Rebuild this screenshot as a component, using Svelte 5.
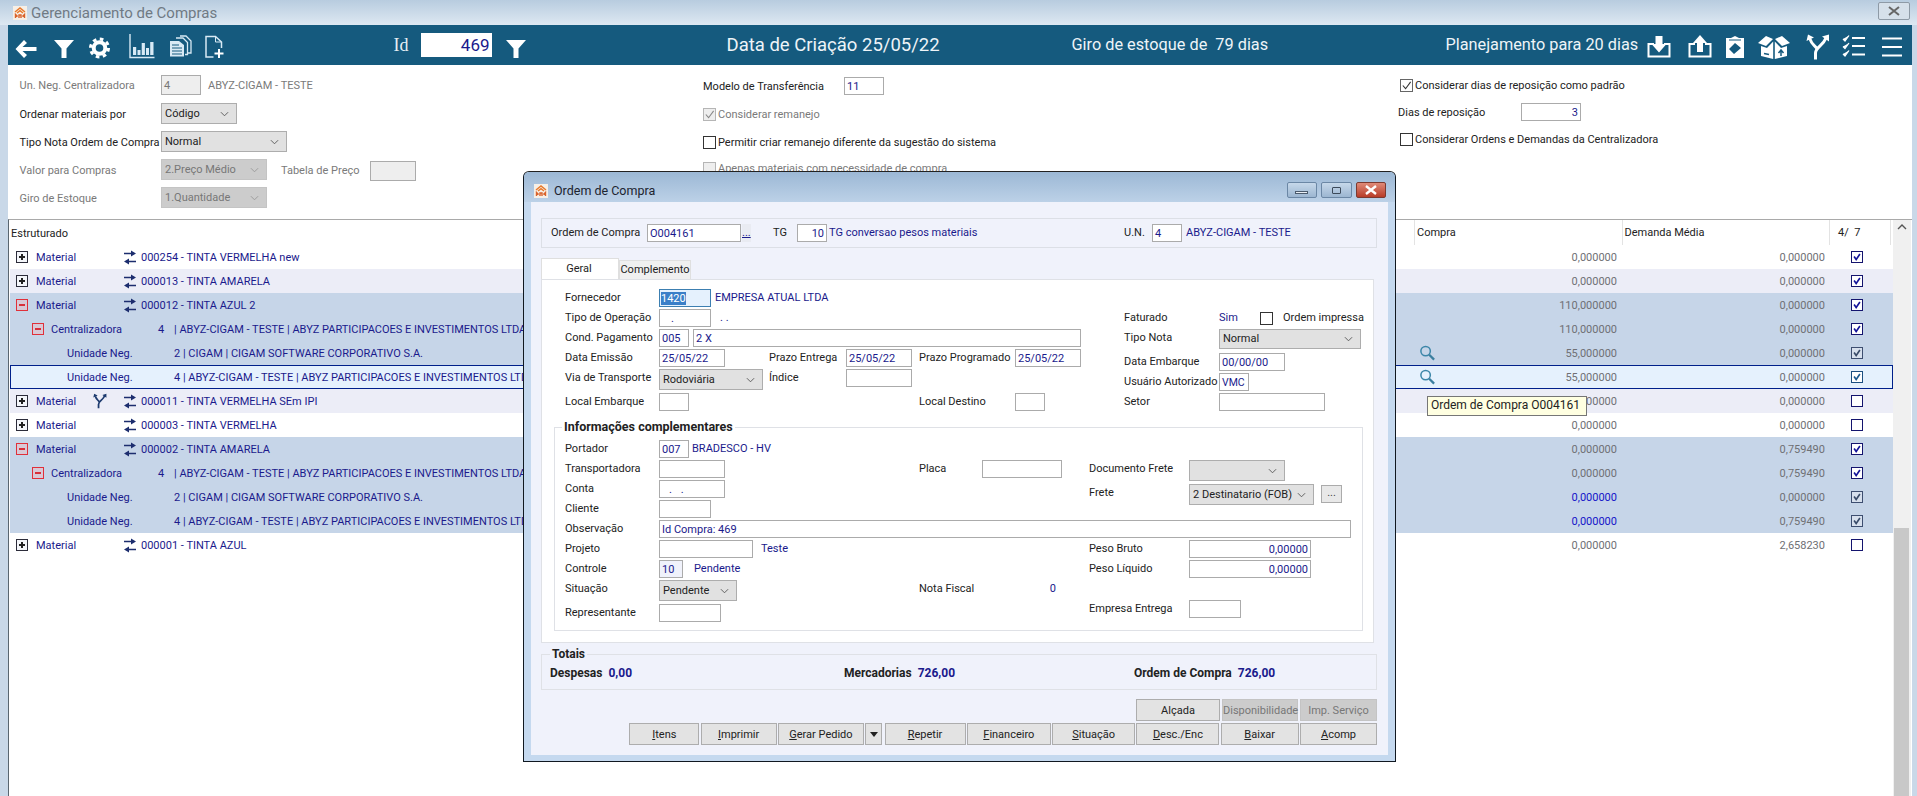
<script>
  const rows = [
    { k: 'm', open: false, label: 'Material', text: '000254 - TINTA VERMELHA new', a: '0,000000', b: '0,000000', chk: 1, bg: '' },
    { k: 'm', open: false, label: 'Material', text: '000013 - TINTA AMARELA', a: '0,000000', b: '0,000000', chk: 1, bg: 'alt' },
    { k: 'm', open: true, label: 'Material', text: '000012 - TINTA AZUL 2', a: '110,000000', b: '0,000000', chk: 1, bg: 'exp' },
    { k: 'c', label: 'Centralizadora', num: '4', text: '| ABYZ-CIGAM - TESTE | ABYZ PARTICIPACOES E INVESTIMENTOS LTDA', a: '110,000000', b: '0,000000', chk: 1, bg: 'exp' },
    { k: 'u', label: 'Unidade Neg.', text: '2 | CIGAM | CIGAM SOFTWARE CORPORATIVO S.A.', a: '55,000000', b: '0,000000', chk: 2, bg: 'exp', mag: true },
    { k: 'u', label: 'Unidade Neg.', text: '4 | ABYZ-CIGAM - TESTE | ABYZ PARTICIPACOES E INVESTIMENTOS LTDA', a: '55,000000', b: '0,000000', chk: 3, bg: 'cur', mag: true },
    { k: 'm', open: false, fork: true, label: 'Material', text: '000011 - TINTA VERMELHA SEm IPI', a: '0,000000', b: '0,000000', chk: 0, bg: 'alt' },
    { k: 'm', open: false, label: 'Material', text: '000003 - TINTA VERMELHA', a: '0,000000', b: '0,000000', chk: 0, bg: '' },
    { k: 'm', open: true, label: 'Material', text: '000002 - TINTA AMARELA', a: '0,000000', b: '0,759490', chk: 1, bg: 'exp' },
    { k: 'c', label: 'Centralizadora', num: '4', text: '| ABYZ-CIGAM - TESTE | ABYZ PARTICIPACOES E INVESTIMENTOS LTDA', a: '0,000000', b: '0,759490', chk: 1, bg: 'exp' },
    { k: 'u', label: 'Unidade Neg.', text: '2 | CIGAM | CIGAM SOFTWARE CORPORATIVO S.A.', a: '0,000000', b: '0,000000', chk: 2, bg: 'exp', blue: true },
    { k: 'u', label: 'Unidade Neg.', text: '4 | ABYZ-CIGAM - TESTE | ABYZ PARTICIPACOES E INVESTIMENTOS LTDA', a: '0,000000', b: '0,759490', chk: 2, bg: 'exp', blue: true },
    { k: 'm', open: false, label: 'Material', text: '000001 - TINTA AZUL', a: '0,000000', b: '2,658230', chk: 0, bg: '' }
  ];
  const buttons = [
    ['I', 'tens', 'b70'], ['I', 'mprimir', 'b76'], ['G', 'erar Pedido', 'b86'], null,
    ['R', 'epetir', 'b81'], ['F', 'inanceiro', 'b84'], ['S', 'ituação', 'b83'],
    ['D', 'esc./Enc', 'b83'], ['B', 'aixar', 'b78'], ['A', 'comp', 'b77']
  ];
</script>

{#snippet logo()}
  <svg class="logo" viewBox="0 0 14 14">
    <rect width="14" height="14" fill="#f6efe6" />
    <path d="M2 6 L7 2 L12 6 M4 7 L7 4.6 L10 7" fill="none" stroke="#e8792b" stroke-width="1.5" />
    <path d="M2.5 12 V8.5 L4.6 10.5 M11.5 12 V8.5 L9.4 10.5 M6 12 V9 H8 V12" fill="none" stroke="#d9622a" stroke-width="1.4" />
  </svg>
{/snippet}

{#snippet sel(text, cls, dis = false)}
  <div class="sel {cls}" class:dis>
    <span>{text}</span>
    <svg viewBox="0 0 10 6" class="chev"><path d="M1 1 L5 5 L9 1" fill="none" stroke="currentColor" stroke-width="1" /></svg>
  </div>
{/snippet}

{#snippet checkbox(on, cls = '')}
  <span class="cb {cls}">
    {#if on}<svg viewBox="0 0 12 12"><path d="M2 6 L5 9.5 L10.5 2" fill="none" stroke="currentColor" stroke-width="1.2" /></svg>{/if}
  </span>
{/snippet}

{#snippet arrows()}
  <svg class="swap" viewBox="0 0 14 15">
    <path d="M1 3.5 H9 M13 11.5 H5" stroke="#1c2d6e" stroke-width="1.6" fill="none" />
    <path d="M8 0.5 L13 3.5 L8 6.5 Z M6 8.5 L1 11.5 L6 14.5 Z" fill="#1c2d6e" />
  </svg>
{/snippet}

{#snippet fork(cls, color)}
  <svg class={cls} viewBox="0 0 24 26">
    <path d="M9.5 25.5 V19 C9.5 13 17 12 20 4 M4 5 C5 9 8 11 10.5 14" fill="none" stroke={color} stroke-width="3" />
    <path d="M0.5 7 L2 0.5 L8 3.5 Z M16 2.5 L23 0.5 L23 7.5 Z" fill={color} />
  </svg>
{/snippet}

<div class="app">
  <header class="wintitle">
    {@render logo()}
    <span>Gerenciamento de Compras</span>
    <button class="winclose" aria-label="Fechar">
      <svg viewBox="0 0 14 10"><path d="M2 1 L12 9 M12 1 L2 9" stroke="#666" stroke-width="2" fill="none" /></svg>
    </button>
  </header>

  <main class="main">
    <div class="toolbar">
      <svg class="ti ia" viewBox="0 0 28 28"><path d="M3.5 16 L12 7 L15 10 L10.5 14 H24.5 V18 H10.5 L15 22 L12 25 Z" /></svg>
      <svg class="ti ib" viewBox="0 0 28 28"><path d="M4 7 H24 L16.5 15.5 V25 H11.5 V15.5 Z" /></svg>
      <svg class="ti ic" viewBox="0 0 28 28"><circle cx="14.5" cy="15" r="5.8" fill="none" stroke="#fff" stroke-width="4" /><circle cx="14.5" cy="15" r="9" fill="none" stroke="#fff" stroke-width="3" stroke-dasharray="3.6 3.47" /></svg>
      <svg class="ti id" viewBox="0 0 28 28"><path d="M2 1 V24.5 H26.5" fill="none" stroke="#d8eaf5" stroke-width="1.4" /><path d="M5 14h3.2v8H5z M9.5 17h3v5h-3z M13.7 10h3.2v12h-3.2z M18 15h3v7h-3z M22.2 9h3.3v13h-3.3z" fill="#d8eaf5" /></svg>
      <svg class="ti ie" viewBox="0 0 28 28"><path d="M14 3 H20 L25 8 V20 H22" fill="none" stroke="#d8eaf5" stroke-width="1.3" /><path d="M10 5 H17 L21.5 9.5 V21.5 H19" fill="none" stroke="#d8eaf5" stroke-width="1.3" /><path d="M4 8 H13 L18 12 V23.5 H4 Z" fill="#d8eaf5" /><path d="M6 12 H13 M6 15 H16 M6 18 H16 M6 21 H16" stroke="#155a7e" stroke-width="1" /></svg>
      <svg class="ti if" viewBox="0 0 28 28"><path d="M13.5 24 H6 V3.5 H15.5 L21.5 9 V15" fill="none" stroke="#d8eaf5" stroke-width="1.5" /><path d="M15.5 3.5 V9 H21.5" fill="none" stroke="#d8eaf5" stroke-width="1" /><path d="M19 16 V25 M14.5 20.5 H23.5" stroke="#fff" stroke-width="2" /></svg>

      <span class="idlabel">Id</span>
      <span class="idinput">469</span>
      <svg class="ti ig" viewBox="0 0 28 28"><path d="M4 7 H24 L16.5 15.5 V25 H11.5 V15.5 Z" /></svg>

      <span class="bartext t1">Data de Criação 25/05/22</span>
      <span class="bartext t2">Giro de estoque de&nbsp; 79 dias</span>
      <span class="bartext t3">Planejamento para 20 dias</span>

      <svg class="ti ih" viewBox="0 0 28 28"><path d="M9 11 H3.5 V23.5 H24.5 V11 H19" fill="none" stroke="#fff" stroke-width="2" /><path d="M10.5 3 H17.5 V11 H21.5 L14 19.5 L6.5 11 H10.5 Z" /></svg>
      <svg class="ti ii" viewBox="0 0 28 28"><path d="M9 11 H3.5 V23.5 H24.5 V11 H19" fill="none" stroke="#fff" stroke-width="2" /><path d="M11 19 V10 H7 L14 2 L21 10 H17 V19 Z" /></svg>
      <svg class="ti ij" viewBox="0 0 28 28"><path fill-rule="evenodd" d="M5 5 H10 L14 3 L18 5 H23 V25 H5 Z M14 10 L20 15 L13 21 L8 16 Z" /><path d="M8 7 H20" stroke="#155a7e" stroke-width="1" /></svg>
      <svg class="ti ik" viewBox="0 0 34 28">
        <path d="M1 10 L9 3 L16 6 L9 13 Z M33 10 L25 3 L18 6 L25 13 Z M4 13 L10 15 L16.2 8.5 V26 L4 23 Z M30 13 L24 15 L17.8 8.5 V26 L30 23 Z" />
        <path d="M24 23 V18 M21.5 20 L24 17 L26.5 20" stroke="#155a7e" stroke-width="1.5" fill="none" />
        <path d="M7 20.5 L12 21.5" stroke="#155a7e" stroke-width="1.5" />
      </svg>
      {@render fork('ti il', '#fff')}
      <svg class="ti im" viewBox="0 0 28 28" fill="none" stroke="#fff"><path d="M3 6 L5 8 L9 2.5 M3 13.5 L5 15.5 L9 10 M3 21 L5 23 L9 17.5" stroke-width="1.2" /><path d="M12 5 H25 M12 13 H25 M12 21.5 H25" stroke-width="2" /></svg>
      <svg class="ti in" viewBox="0 0 28 28" fill="none" stroke="#fff"><path d="M4 5.5 H24 M4 14 H24 M4 22.5 H24" stroke-width="2.2" /></svg>
    </div>

    <section class="filters">
      <div class="fcol c1">
        <div class="frow r20 mt10 gray"><span class="flabel">Un. Neg. Centralizadora</span><div class="inp dis w40">4</div><span class="after">ABYZ-CIGAM - TESTE</span></div>
        <div class="frow r21 mt8"><span class="flabel">Ordenar materiais por</span>{@render sel('Código', 'w76')}</div>
        <div class="frow r21 mt7"><span class="flabel">Tipo Nota Ordem de Compra</span>{@render sel('Normal', 'w126')}</div>
        <div class="frow r21 mt7 gray"><span class="flabel">Valor para Compras</span>{@render sel('2.Preço Médio', 'w106', true)}<span class="tabela">Tabela de Preço</span><div class="inp dis w46 drop">&nbsp;</div></div>
        <div class="frow r21 mt7 gray"><span class="flabel">Giro de Estoque</span>{@render sel('1.Quantidade', 'w106', true)}</div>
      </div>
      <div class="fcol c2">
        <div class="frow r20 mt11"><span class="mlabel">Modelo de Transferência</span><div class="inp w40">11</div></div>
        <div class="frow ck gray mt11">{@render checkbox(true, 'cdis')}<span class="cktext">Considerar remanejo</span></div>
        <div class="frow ck mt14">{@render checkbox(false)}<span class="cktext">Permitir criar remanejo diferente da sugestão do sistema</span></div>
        <div class="frow ck gray mt12">{@render checkbox(false, 'cdis')}<span class="cktext">Apenas materiais com necessidade de compra</span></div>
      </div>
      <div class="fcol c3">
        <div class="frow ck mt13">{@render checkbox(true, 'cgray')}<span class="cktext">Considerar dias de reposição como padrão</span></div>
        <div class="frow r18 mt11"><span class="dlabel">Dias de reposição</span><div class="inp w60 vright nv">3</div></div>
        <div class="frow ck mt11">{@render checkbox(false)}<span class="cktext">Considerar Ordens e Demandas da Centralizadora</span></div>
      </div>
    </section>

    <section class="gridwrap">
      <div class="grid">
        <div class="ghead">
          <span class="h0">Estruturado</span>
          <span class="h1">Compra</span>
          <span class="h2">Demanda Média</span>
          <span class="h3">4/&nbsp; 7</span>
        </div>
        {#each rows as r}
          <div class="row {r.bg}">
            <div class="tree {r.k}">
              {#if r.k === 'm'}
                <span class="exp-box" class:open={r.open}><i></i>{#if !r.open}<b></b>{/if}</span>
                <span class="lbl-m">{r.label}</span>
                <span class="forkcell">{#if r.fork}{@render fork('rowfork', '#1c3a6e')}{/if}</span>
                {@render arrows()}
                <span class="rtext">{r.text}</span>
              {:else if r.k === 'c'}
                <span class="exp-box open"><i></i></span>
                <span class="lbl-c">{r.label}</span>
                <span class="num">{r.num}</span>
                <span class="rest">{r.text}</span>
              {:else}
                <span class="lbl-u">{r.label}</span>
                <span class="rest">{r.text}</span>
              {/if}
            </div>
            <div class="magcell">
              {#if r.mag}
                <svg viewBox="0 0 18 18"><circle cx="7" cy="7" r="5" fill="none" stroke="#3b86a8" stroke-width="1.6" /><path d="M10.8 10.8 L16 16" stroke="#3b7f9f" stroke-width="2.4" /></svg>
              {/if}
            </div>
            <div class="val" class:blueval={r.blue}>{r.a}</div>
            <div class="val">{r.b}</div>
            <div class="chkcell">
              <span class="gcb s{r.chk}">
                {#if r.chk}<svg viewBox="0 0 12 12"><path d="M2.5 5.5 L5 9 L9.5 2.5" fill="none" stroke="currentColor" stroke-width="2" /></svg>{/if}
              </span>
            </div>
          </div>
        {/each}
      </div>
      <div class="scroll">
        <div class="up"><svg viewBox="0 0 10 6"><path d="M1 5 L5 1 L9 5" fill="none" stroke="#555" stroke-width="1.4" /></svg></div>
        <div class="thumb"></div>
      </div>
    </section>
  </main>

  <div class="tooltip">Ordem de Compra O004161</div>

  <div class="dialog">
    <header class="dtitle">
      {@render logo()}
      <span>Ordem de Compra</span>
      <div class="dbtns">
        <span class="dbtn"><i class="min"></i></span>
        <span class="dbtn"><i class="max"></i></span>
        <span class="dbtn close"><svg viewBox="0 0 14 10"><path d="M2 1 L12 9 M12 1 L2 9" stroke="#fff" stroke-width="2.4" fill="none" /></svg></span>
      </div>
    </header>
    <div class="dbody">
      <div class="hpanel">
        <span class="hl1">Ordem de Compra</span>
        <div class="inp w94">O004161</div>
        <span class="dots">...</span>
        <span class="hl2">TG</span>
        <div class="inp w30 vright">10</div>
        <span class="v tgtext">TG conversao pesos materiais</span>
        <span class="hl3">U.N.</span>
        <div class="inp w30">4</div>
        <span class="v unv">ABYZ-CIGAM - TESTE</span>
      </div>

      <div class="tabs">
        <span class="tab on">Geral</span>
        <span class="tab">Complemento</span>
      </div>

      <div class="page">
        <div class="upper">
          <div class="ugrid">
            <span>Fornecedor</span>
            <div class="span-all line"><div class="inp w52 focus"><mark>1420</mark></div><span class="v ml4">EMPRESA ATUAL LTDA</span></div>
            <span>Tipo de Operação</span>
            <div class="span-all line"><div class="inp w52 cdots">.</div><span class="v ml9">. .</span></div>
            <span>Cond. Pagamento</span>
            <div class="span-all line"><div class="inp w30">005</div><div class="inp w388 ml4">2 X</div></div>
            <span>Data Emissão</span>
            <div class="inp w66">25/05/22</div>
            <span>Prazo Entrega</span>
            <div class="inp w66">25/05/22</div>
            <span>Prazo Programado</span>
            <div class="inp w66">25/05/22</div>
            <span>Via de Transporte</span>
            {@render sel('Rodoviária', 'w104')}
            <span>Índice</span>
            <div class="inp w66">&nbsp;</div>
            <i></i><i></i>
            <span>Local Embarque</span>
            <div class="inp w30">&nbsp;</div>
            <i></i><i></i>
            <span>Local Destino</span>
            <div class="inp w30">&nbsp;</div>
          </div>
          <div class="rgrid">
            <span>Faturado</span>
            <div class="line"><span class="v sim">Sim</span>{@render checkbox(false)}<span class="oi">Ordem impressa</span></div>
            <span>Tipo Nota</span>
            {@render sel('Normal', 'w142 h20')}
            <span>Data Embarque</span>
            <div class="inp w66">00/00/00</div>
            <span>Usuário Autorizado</span>
            <div class="inp w30 small">VMC</div>
            <span>Setor</span>
            <div class="inp w106">&nbsp;</div>
          </div>
        </div>

        <fieldset class="group">
          <legend>Informações complementares</legend>
          <div class="ggrid">
            <span>Portador</span>
            <div class="span-to-end line"><div class="inp w30">007</div><span class="v ml3">BRADESCO - HV</span></div>

            <span>Transportadora</span>
            <div class="inp w66">&nbsp;</div>
            <span>Placa</span>
            <div class="inp w80">&nbsp;</div>
            <span>Documento Frete</span>
            {@render sel('', 'w96')}

            <span>Conta</span>
            <div class="inp w66 cdots2">. .</div>
            <i></i><i></i>
            <span class="dn4">Frete</span>
            <div class="line dn4 top">{@render sel('2 Destinatario (FOB)', 'w125')}<span class="morebtn">...</span></div>

            <span>Cliente</span>
            <div class="span-to-end"><div class="inp w52">&nbsp;</div></div>

            <span>Observação</span>
            <div class="span-to-end"><div class="inp w692">Id Compra: 469</div></div>

            <span>Projeto</span>
            <div class="line span34"><div class="inp w94">&nbsp;</div><span class="v ml8">Teste</span></div>
            <span>Peso Bruto</span>
            <div class="inp w122 vright">0,00000</div>

            <span>Controle</span>
            <div class="line span34"><div class="inp w24 tint">10</div><span class="v ml11">Pendente</span></div>
            <span>Peso Líquido</span>
            <div class="inp w122 vright">0,00000</div>

            <span>Situação</span>
            {@render sel('Pendente', 'w78')}
            <span>Nota Fiscal</span>
            <span class="v nfv">0</span>
            <i></i><i></i>

            <span class="dn4">Representante</span>
            <div class="inp w62 dn4">&nbsp;</div>
            <i></i><i></i>
            <span>Empresa Entrega</span>
            <div class="inp w52">&nbsp;</div>
          </div>
        </fieldset>
      </div>

      <fieldset class="totais">
        <legend>Totais</legend>
        <div class="totrow">
          <div class="tot t-a"><b>Despesas</b><b class="v">0,00</b></div>
          <div class="tot t-b"><b>Mercadorias</b><b class="v">726,00</b></div>
          <div class="tot t-c"><b>Ordem de Compra</b><b class="v">726,00</b></div>
        </div>
      </fieldset>

      <div class="btnrow first">
        <span class="btn b84">Alçada</span>
        <span class="btn off b76">Disponibilidade</span>
        <span class="btn off b77">Imp. Serviço</span>
      </div>
      <div class="btnrow">
        {#each buttons as b}
          {#if b}
            <span class="btn {b[2]}"><u>{b[0]}</u>{b[1]}</span>
          {:else}
            <span class="btn arrowbtn"><svg viewBox="0 0 8 5"><path d="M0 0 H8 L4 5 Z" fill="#222" /></svg></span>
          {/if}
        {/each}
      </div>
    </div>
  </div>
</div>

<style>
  :global(body) { margin: 0; background: #fff; }
  .app {
    position: relative; width: 1917px; height: 796px; overflow: hidden;
    display: flex; flex-direction: column;
    background: #c9d8e8;
    font: 11px/18px Roboto, "Noto Sans", sans-serif;
    color: #222;
  }
  .logo { width: 14px; height: 14px; flex: none; }

  .wintitle {
    height: 25px; flex: none; display: flex; align-items: center; padding-left: 13px; gap: 4px;
    background: linear-gradient(#b8ccdf, #dde8f2); color: #707a84; font-size: 15px;
    box-sizing: border-box; position: relative;
  }
  .winclose {
    margin-left: auto; margin-right: 7px; width: 32px; height: 18px; margin-top: -4px; padding: 0;
    border: 1px solid #8e9aa6; border-radius: 2px; background: #d6e0ea; display: flex; align-items: center; justify-content: center;
  }
  .winclose svg { width: 14px; height: 10px; }

  .main { flex: 1; margin: 0 5px 0 8px; background: #fff; display: flex; flex-direction: column; min-height: 0; }

  .toolbar { height: 40px; flex: none; background: #155a7e; display: flex; align-items: center; position: relative; color: #fff; }
  .ti { width: 28px; height: 28px; flex: none; fill: #fff; margin-top: 4px; }
  .ia { margin-left: 3.5px; }
  .ib { margin-left: 10px; }
  .ic { margin-left: 7px; }
  .id { margin-left: 15px; }
  .ie { margin-left: 10px; }
  .if { margin-left: 6px; }
  .idlabel { margin-left: 166px; font: 18px/24px "Liberation Serif", serif; color: #e6eef3; width: 27px; }
  .idinput { width: 71px; height: 24px; background: #fff; color: #1a1a8c; font-size: 17px; line-height: 24px; text-align: right; padding-right: 2px; box-sizing: border-box; }
  .ig { margin-left: 10px; }
  .bartext { font-size: 16.3px; line-height: 24px; white-space: nowrap; color: #eef4f8; flex: none; }
  .t1 { margin-left: 197px; width: 345px; font-size: 18.5px; }
  .t2 { width: 374px; }
  .t3 { width: 199px; }
  .ih { margin-left: 0; }
  .ii { margin-left: 13px; }
  .ij { margin-left: 7px; }
  .ik { width: 34px; margin-left: 8px; }
  .il { width: 24px; height: 26px; margin-left: 15px; }
  .im { margin-left: 10.5px; width: 28px; }
  .in { margin-left: 10px; }

  .filters { height: 154px; flex: none; display: flex; overflow: hidden; }
  .fcol { display: flex; flex-direction: column; flex: none; }
  .c1 { width: 694px; padding-left: 11.5px; box-sizing: border-box; }
  .c2 { width: 696px; padding-left: 1px; box-sizing: border-box; }
  .c3 { flex: 1; padding-left: 2px; }
  .frow { display: flex; align-items: center; white-space: nowrap; flex: none; }
  .r20 { height: 20px; } .r21 { height: 21px; } .r18 { height: 18px; }
  .mt7 { margin-top: 7px; } .mt8 { margin-top: 8px; } .mt10 { margin-top: 10px; } .mt11 { margin-top: 11px; } .mt12 { margin-top: 12px; } .mt13 { margin-top: 13px; } .mt14 { margin-top: 14px; }
  .gray { color: #7a7a7a; }
  .flabel { width: 141.5px; flex: none; padding-top: 2px; }
  .mlabel { width: 141px; flex: none; padding-top: 2px; }
  .dlabel { width: 123px; flex: none; margin-left: -2px; padding-top: 2px; }
  .after { margin-left: 7px; padding-top: 2px; }
  .tabela { margin-left: 14px; width: 89px; padding-top: 2px; }
  .cktext { padding-top: 2px; }
  .drop { height: 20px; margin-top: 2px; }
  .ck { gap: 2px; height: 14px; }

  .inp {
    box-sizing: border-box; height: 18px; border: 1px solid #ababab; background: #fff; color: #1a1a8c;
    padding: 0 2px; line-height: 17px; white-space: nowrap; overflow: hidden; flex: none;
  }
  .inp.dis { background: #eee; color: #777; height: 20px; line-height: 19px; }
  .vright { text-align: right; }
  .w24 { width: 24px; } .w30 { width: 30px; } .w40 { width: 40px; } .w46 { width: 46px; } .w52 { width: 52px; } .w60 { width: 60px; } .w62 { width: 62px; } .w66 { width: 66px; } .w76 { width: 76px; } .w78 { width: 78px; } .w80 { width: 80px; } .w94 { width: 94px; } .w96 { width: 96px; } .w104 { width: 104px; } .w106 { width: 106px; } .w122 { width: 122px; } .w125 { width: 125px; } .w126 { width: 126px; } .w142 { width: 142px; } .w388 { width: 388px; } .w692 { width: 692px; }

  .sel {
    box-sizing: border-box; height: 21px; background: #e1e1e1; border: 1px solid #adadad; color: #222;
    display: flex; align-items: center; justify-content: space-between; padding: 0 7px 0 3px; flex: none; white-space: nowrap;
  }
  .sel.dis { background: #ccc; color: #777; border-color: #c4c4c4; }
  .sel.h20 { height: 20px; }
  .chev { width: 9px; height: 6px; color: #555; flex: none; }
  .sel.dis .chev { color: #999; }

  .cb { width: 13px; height: 13px; box-sizing: border-box; border: 1px solid #333; background: #fff; display: inline-flex; flex: none; color: #333; }
  .cb svg { width: 11px; height: 11px; }
  .cb.cdis { border-color: #b5b5b5; background: #eee; color: #888; }
  .cb.cgray { border-color: #666; }

  .gridwrap { flex: 1; min-height: 0; display: flex; border-top: 1px solid #a9a9a9; background: #fff; border-left: 1px solid #5a6670; }
  .grid { width: 1884px; flex: none; }
  .ghead { height: 25px; display: flex; align-items: center; color: #222; }
  .ghead span { white-space: nowrap; flex: none; }
  .h0 { margin-left: 2px; width: 1403px; padding-top: 2px; }
  .h1 { width: 207.5px; box-sizing: border-box; padding-left: 2px; border-left: 1px solid #e3e3e3; line-height: 25px; }
  .h2 { width: 207.5px; box-sizing: border-box; padding-left: 2px; border-left: 1px solid #e3e3e3; line-height: 25px; }
  .h3 { width: 62px; box-sizing: border-box; padding-left: 8px; border-left: 1px solid #e3e3e3; border-right: 1px solid #e3e3e3; line-height: 25px; }

  .row { height: 24px; width: 1883px; margin-left: 1px; display: grid; grid-template-columns: 1404px 24px 179px 208px 68px; align-items: center; color: #1a1a8c; }
  .row.alt { background: #ecedf7; }
  .row.exp { background: #c6d5e8; }
  .row.cur { background: #e5f1fd; box-shadow: inset 0 0 0 1px #00208a; }

  .tree { display: flex; align-items: center; white-space: nowrap; overflow: hidden; padding-left: 6px; min-width: 0; }
  .tree.c { padding-left: 22px; }
  .tree.u { padding-left: 0; }
  .rtext, .rest { padding-top: 2px; }
  .exp-box { width: 12px; height: 12px; box-sizing: border-box; border: 1px solid #2c2c3a; background: #f4f6fa; position: relative; flex: none; }
  .exp-box i { position: absolute; left: 2px; right: 2px; top: 4px; height: 2px; background: #222; }
  .exp-box b { position: absolute; top: 2px; bottom: 2px; left: 4px; width: 2px; background: #222; }
  .exp-box.open { border-color: #e0303a; background: #d9c9d6; }
  .exp-box.open i { background: #d8303a; }
  .lbl-m { margin-left: 8px; width: 57px; flex: none; padding-top: 2px; }
  .forkcell { width: 14px; height: 16px; flex: none; }
  .rowfork { width: 14px; height: 16px; display: block; }
  .swap { width: 14px; height: 15px; margin-left: 16px; margin-right: 4px; flex: none; }
  .lbl-c { margin-left: 7px; width: 107px; flex: none; padding-top: 2px; }
  .num { width: 16px; flex: none; padding-top: 2px; }
  .lbl-u { margin-left: 57px; width: 107px; flex: none; padding-top: 2px; }

  .magcell svg { width: 17px; height: 18px; display: block; margin-left: 5px; }
  .magcell { height: 18px; }
  .val { text-align: right; color: #6f7074; padding-top: 2px; }
  .val.blueval { color: #1414c8; }
  .chkcell { padding-left: 26px; display: flex; }
  .gcb { width: 10px; height: 10px; box-sizing: content-box; border: 1px solid #14146e; background: #fff; color: #14149a; display: flex; }
  .gcb svg { width: 10px; height: 10px; }
  .gcb.s2 { border-color: #3d4e70; background: #d7e0ed; color: #3a4c6a; }
  .gcb.s3 { border-color: #1c4f80; color: #1c5a90; }

  .scroll { width: 18px; background: #f0f0f0; position: relative; display: flex; flex-direction: column; justify-content: flex-end; }
  .scroll .up { position: absolute; top: 4px; left: 0; right: 0; display: flex; justify-content: center; }
  .scroll .up svg { width: 10px; height: 6px; }
  .thumb { height: 268px; margin: 0 2px 0 1px; background: #c8c8c8; }

  .tooltip {
    position: absolute; left: 1427px; top: 396px; width: 160px; height: 20px; box-sizing: border-box;
    background: #ffffe1; border: 1px solid #767676; color: #222; line-height: 17px; padding-left: 3px; white-space: nowrap; z-index: 2; font-size: 12px;
  }

  .dialog {
    position: absolute; left: 523px; top: 171px; width: 873px; height: 591px; box-sizing: border-box;
    border: 1px solid #101820; border-top-color: #222; border-radius: 6px 6px 0 0; background: #c5d9ef;
    display: flex; flex-direction: column; z-index: 1; overflow: hidden;
  }
  .dtitle {
    height: 30px; flex: none; box-sizing: border-box; display: flex; align-items: center; padding: 8px 0 0 10px; gap: 6px;
    background: linear-gradient(#9cb8d5, #bcd1e7); font-size: 12.5px; color: #1c2430;
  }
  .dbtns { margin-left: auto; margin-right: 9px; display: flex; gap: 4px; margin-top: -2px; }
  .dbtn { width: 30.5px; height: 16px; box-sizing: border-box; border: 1px solid #6b87a5; border-radius: 2px; background: linear-gradient(#c6d8ea, #9cb6d1); display: flex; align-items: center; justify-content: center; }
  .dbtn.close { background: linear-gradient(#df8a78, #b83c28); border-color: #7c3a30; }
  .dbtn.close svg { width: 14px; height: 10px; }
  .min { width: 11px; background: #e8eef5; border: 1px solid #4a5a6c; box-sizing: content-box; margin-top: 5px; height: 1px; }
  .max { width: 7px; height: 5px; border: 1px solid #3c4a5a; border-radius: 1px; }
  .dbody { flex: 1; margin: 0 7px 6px 7px; background: #f0f2fb; padding: 16px 10px 0 10px; min-height: 0; }

  .hpanel { height: 30px; box-sizing: border-box; border: 1px solid #dcdfe6; display: flex; align-items: center; white-space: nowrap; width: 836px; }
  .hl1 { margin-left: 9px; width: 96px; flex: none; }
  .dots { width: 9px; margin-left: 1px; color: #1a1a8c; text-decoration: underline; background: #e9ebf2; flex: none; line-height: 18px; }
  .hl2 { margin-left: 22px; width: 24px; flex: none; }
  .v { color: #1a1a8c; font-weight: inherit; }
  .tgtext { margin-left: 2px; width: 295px; flex: none; }
  .hl3 { width: 28px; flex: none; }
  .unv { margin-left: 4px; }

  .tabs { display: flex; align-items: flex-end; height: 31px; }
  .tab { height: 19px; width: 72px; box-sizing: border-box; background: #f0f0f0; border: 1px solid #dfdfdf; border-bottom: none; text-align: center; line-height: 17px; }
  .tab.on { height: 21px; width: 78px; background: #fff; padding-right: 2px; line-height: 19px; }

  .page { width: 833px; height: 364px; box-sizing: border-box; background: #fff; border: 1px solid #dfe1e6; padding: 9px 11px 0 23px; }
  .upper { display: flex; height: 130px; }
  .upper span, .ggrid span { white-space: nowrap; }
  .ugrid {
    width: 559px; flex: none; display: grid;
    grid-template-columns: 94px 110px 77px 73px 96px 66px;
    grid-template-rows: 20px 20px 20px 20px 24px 18px; align-items: start;
  }
  .span-all { grid-column: 2 / -1; }
  .line { display: flex; align-items: flex-start; white-space: nowrap; }
  .ml3 { margin-left: 3px; } .ml4 { margin-left: 4px; } .ml8 { margin-left: 8px; } .ml9 { margin-left: 9px; } .ml11 { margin-left: 11px; }
  .focus { background: #e5f1fd; border-color: #3c7fb1; padding: 0 1px; }
  mark { background: #3a7fc8; color: #fff; }
  .cdots { padding-left: 11px; }
  .cdots2 { padding-left: 9px; letter-spacing: 3px; }
  .rgrid {
    flex: none; width: 242px; margin-top: 20px; display: grid; grid-template-columns: 95px 1fr;
    grid-template-rows: 20px 24px 20px 20px 18px; align-items: start;
  }
  .sim { width: 41px; flex: none; }
  .oi { margin-left: 10px; }
  .rgrid .cb { margin-top: 3px; }
  .small { font-size: 10.5px; }

  fieldset { margin: 0; padding: 0; min-width: 0; box-sizing: border-box; border: 1px solid #dfe1e6; }
  legend { font-weight: 700; padding: 0 2px; color: #222; line-height: 14px; font-size: 12px; }
  .group { height: 211px; margin: 1px 0 0 -11px; width: 809px; padding: 0 0 0 10px; }
  .group legend { margin-left: -3px; font-size: 12.5px; }
  .ggrid {
    display: grid; margin-top: 6px;
    grid-template-columns: 94px 260px 63px 107px 100px 1fr;
    grid-auto-rows: 20px; align-items: start; white-space: nowrap;
  }
  .span-to-end { grid-column: 2 / -1; }
  .span34 { grid-column: 2 / 5; }
  .dn4 { margin-top: 4px; }
  .top { align-items: flex-start; }
  .morebtn { margin-left: 7px; width: 21px; height: 18px; box-sizing: border-box; border: 1px solid #ababab; background: #e8e8e8; text-align: center; line-height: 14px; color: #444; flex: none; margin-top: 1px; }
  .tint { background: #f0f2fb; }
  .nfv { text-align: right; grid-column: 4; width: 74px; }

  .totais { width: 836px; height: 43px; margin-top: 4px; background: #f0f2fb; padding: 0 0 0 8px; }
  .totais legend { margin-left: 0; }
  .totrow { display: flex; line-height: 18px; margin-top: 3px; font-size: 12px; }
  .tot { display: flex; gap: 6px; white-space: nowrap; flex: none; font-weight: 700; }
  .tot b { font-weight: 700; }
  .t-a { width: 294px; } .t-b { width: 290px; }

  .btnrow { display: flex; justify-content: flex-end; gap: 1.3px; width: 836px; margin-top: 2px; }
  .btnrow.first { margin-top: 9px; gap: 2px; }
  .btn { height: 22px; box-sizing: border-box; background: #e3e3e3; border: 1px solid #adadad; text-align: center; line-height: 21px; white-space: nowrap; flex: none; color: #222; }
  .btn.off { background: #ccc; color: #777; border-color: #c4c4c4; }
  .b70 { width: 70px; } .b76 { width: 76px; } .b77 { width: 77px; } .b78 { width: 78px; } .b81 { width: 81px; } .b83 { width: 83px; } .b84 { width: 84px; } .b86 { width: 86px; }
  .arrowbtn { width: 17px; display: flex; align-items: center; justify-content: center; margin-right: 1px; }
  .arrowbtn svg { width: 8px; height: 5px; }
</style>
